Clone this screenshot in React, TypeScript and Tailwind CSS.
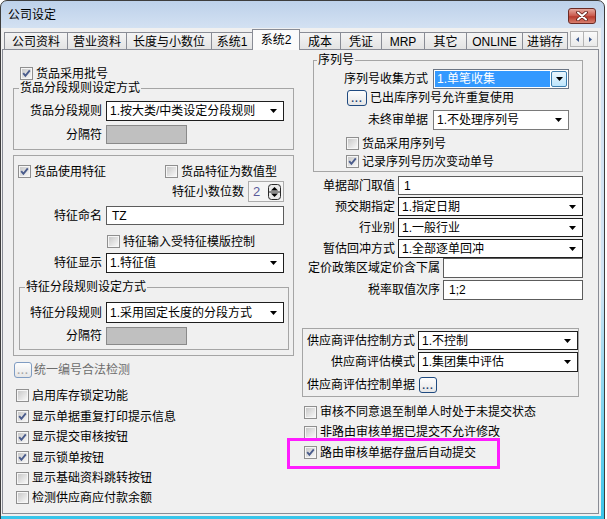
import React from 'react'

function Check({ on }: { on?: boolean }) {
  return (
    <span className="relative block w-[13px] h-[13px] shrink-0 border border-[#8f8f8f] bg-[#f6f6f6] p-[1px]">
      <span className="block w-full h-full bg-[linear-gradient(135deg,#c9c9c9,#f7f7f7)]" />
      {on && (
        <svg className="absolute left-0 top-0" width="11" height="11" viewBox="0 0 11 11">
          <path d="M2.2 5.2 L4.4 7.8 L8.8 2.4" fill="none" stroke="#4a5c8c" strokeWidth="1.9" />
        </svg>
      )}
    </span>
  )
}

function CheckRow({ on, label, className = '' }: { on?: boolean; label: string; className?: string }) {
  return (
    <div className={`flex items-center ${className}`}>
      <Check on={on} />
      <span className="ml-[3px] whitespace-nowrap">{label}</span>
    </div>
  )
}

function Combo({ value, className = '', light }: { value: string; className?: string; light?: boolean }) {
  return (
    <div
      className={`flex items-center justify-between bg-white border pl-[3px] pr-[6px] ${
        light ? 'border-[#7a7a7a]' : 'border-[#1e1e1e]'
      } ${className}`}
    >
      <span className="whitespace-nowrap">{value}</span>
      <svg width="7" height="4" viewBox="0 0 7 4">
        <path d="M0 0H7L3.5 4Z" fill="#000" />
      </svg>
    </div>
  )
}

function Field({ value = '', className = '' }: { value?: string; className?: string }) {
  return (
    <div className={`flex items-center bg-white border border-[#5c5c5c] pl-[5px] ${className}`}>{value}</div>
  )
}

function Dots({ disabled, className = '' }: { disabled?: boolean; className?: string }) {
  return (
    <div
      className={`flex items-end justify-center rounded-[3px] border bg-[linear-gradient(#fdfdfd,#e6e6e6)] pb-[2px] text-[10px] leading-[8px] font-bold tracking-[1px] ${
        disabled ? 'border-[#7f9cc2] text-[#a6a6a6]' : 'border-[#1f4a80] text-[#24426e]'
      } ${className}`}
    >
      ...
    </div>
  )
}

function Sep({ className = '' }: { className?: string }) {
  return <div className={`bg-[#c0c0c0] border border-[#8a8a8a] ${className}`} />
}

function Tab({ label, className = '', active }: { label: string; className?: string; active?: boolean }) {
  return (
    <div
      className={`flex justify-center border-[#898c95] whitespace-nowrap ${
        active
          ? 'relative z-10 h-[21px] items-start pt-[3px] bg-[#fbfbfb] border-t border-l border-r'
          : 'h-[18px] items-center bg-[linear-gradient(#f4f4f4,#e2e2e2)] border-t border-l'
      } ${className}`}
    >
      {label}
    </div>
  )
}

export default function App() {
  return (
    <div className="relative w-[607px] h-[519px] overflow-hidden bg-white text-[12px] leading-[14px] text-black font-['Liberation_Sans','Noto_Sans_CJK_SC',sans-serif]">
      <div className="w-[605px] h-[520px] flex flex-col border border-[#3d3d3d] rounded-t-[7px] bg-[linear-gradient(to_bottom,#bdd1ea_0px,#d3e1f2_27px,#cfe3f3_55%,#37c5ea_100%)]">
        {/* title bar */}
        <div className="h-[27px] shrink-0 flex items-start justify-between pl-[7px] pr-[8px]">
          <span className="mt-[7px] text-[12px]">公司设定</span>
          <div className="mt-[7px] w-[28px] h-[16px] flex items-center justify-center rounded-[3px] border border-[#6b2b25] bg-[linear-gradient(#e6a99f,#c9574a_50%,#b83a2d_55%,#d9806f)]">
            <svg width="12" height="10" viewBox="0 0 12 10">
              <path d="M2 1.5 L10 8.5 M10 1.5 L2 8.5" stroke="#5a1a14" strokeWidth="3.6" strokeLinecap="round" />
              <path d="M2 1.5 L10 8.5 M10 1.5 L2 8.5" stroke="#ffffff" strokeWidth="2" strokeLinecap="round" />
            </svg>
          </div>
        </div>

        {/* body */}
        <div className="flex-1 mr-[3px] mb-[3px] bg-[#f0f0f0] pt-[1px] flex flex-col">
          {/* tabs */}
          <div className="ml-[3px] -mb-px h-[21px] flex items-end">
            <Tab label="公司资料" className="w-[63px]" />
            <Tab label="营业资料" className="w-[59px]" />
            <Tab label="长度与小数位" className="w-[85px]" />
            <Tab label="系统1" className="w-[41px]" />
            <Tab label="系统2" className="w-[48px]" active />
            <Tab label="成本" className="w-[40px] border-l-0" />
            <Tab label="凭证" className="w-[41px]" />
            <Tab label="MRP" className="w-[43px]" />
            <Tab label="其它" className="w-[42px]" />
            <Tab label="ONLINE" className="w-[56px]" />
            <Tab label="进销存" className="w-[46px] border-r" />
            <div className="self-start mt-[2px] ml-[2px] flex">
              <div className="w-[14px] h-[16px] flex items-center justify-center border border-[#b4b4b4] bg-[linear-gradient(#fafafa,#e9e9e9)]">
                <svg width="3" height="5" viewBox="0 0 3 5"><path d="M3 0V5L0 2.5Z" fill="#3f5a8e" /></svg>
              </div>
              <div className="w-[14px] h-[16px] flex items-center justify-center border border-l-0 border-[#b4b4b4] bg-[linear-gradient(#fafafa,#e9e9e9)]">
                <svg width="3" height="5" viewBox="0 0 3 5"><path d="M0 0V5L3 2.5Z" fill="#3f5a8e" /></svg>
              </div>
            </div>
          </div>

          {/* page */}
          <div className="ml-[1px] w-[597px] h-[465px] border border-[#898c95] bg-[#f0f0f0] flex items-start">
            {/* left column */}
            <div className="ml-[10px] w-[281px] flex flex-col">
              <CheckRow on label="货品采用批号" className="mt-[16px] h-[15px] ml-[7px]" />

              <fieldset className="w-[281px] border border-[#a5a5a5] pb-[5px]">
                <legend className="ml-[5px] px-[1px] leading-[14px]">货品分段规则设定方式</legend>
                <div className="mt-[6px] flex items-center h-[20px]">
                  <span className="w-[88px] text-right whitespace-nowrap">货品分段规则</span>
                  <Combo value="1.按大类/中类设定分段规则" className="ml-[4px] w-[178px] h-[20px]" />
                </div>
                <div className="mt-[4px] flex items-center h-[19px]">
                  <span className="w-[88px] text-right">分隔符</span>
                  <Sep className="ml-[4px] w-[81px] h-[19px]" />
                </div>
              </fieldset>

              <div className="mt-[5px] w-[281px] border border-[#a5a5a5] pb-[5px]">
                <div className="mt-[9px] flex items-center h-[13px]">
                  <CheckRow on label="货品使用特征" className="ml-[4px] w-[147px]" />
                  <CheckRow label="货品特征为数值型" />
                </div>
                <div className="mt-[3px] flex items-center justify-end h-[21px] pr-[9px]">
                  <span className="whitespace-nowrap">特征小数位数</span>
                  <div className="ml-[4px] w-[36px] h-[21px] flex items-center justify-between border border-[#acacac] bg-[#f5f5f5] pl-[4px] pr-[2px]">
                    <span className="text-[#5a5a9a] text-[13px]">2</span>
                    <svg width="13" height="16" viewBox="0 0 13 16">
                      <rect x="0.5" y="0.5" width="12" height="15" rx="3" fill="#e9e9e9" stroke="#2a2a2a" />
                      <path d="M1 8H12" stroke="#2a2a2a" />
                      <path d="M3 6.5H10L6.5 3Z" fill="#000" />
                      <path d="M3 9.5H10L6.5 13Z" fill="#000" />
                    </svg>
                  </div>
                </div>
                <div className="mt-[4px] flex items-center h-[19px]">
                  <span className="w-[88px] text-right">特征命名</span>
                  <Field value="TZ" className="ml-[4px] w-[178px] h-[19px]" />
                </div>
                <CheckRow label="特征输入受特征模版控制" className="mt-[10px] h-[13px] ml-[93px]" />
                <div className="mt-[5px] flex items-center h-[20px]">
                  <span className="w-[88px] text-right">特征显示</span>
                  <Combo value="1.特征值" className="ml-[4px] w-[178px] h-[20px]" />
                </div>

                <fieldset className="mt-[7px] ml-[5px] w-[270px] border border-[#a5a5a5] pb-[4px]">
                  <legend className="ml-[5px] px-[1px] leading-[14px]">特征分段规则设定方式</legend>
                  <div className="mt-[8px] flex items-center h-[21px]">
                    <span className="w-[82px] text-right whitespace-nowrap">特征分段规则</span>
                    <Combo value="1.采用固定长度的分段方式" className="ml-[4px] w-[178px] h-[21px]" />
                  </div>
                  <div className="mt-[4px] flex items-center h-[18px]">
                    <span className="w-[82px] text-right">分隔符</span>
                    <Sep className="ml-[4px] w-[81px] h-[18px]" />
                  </div>
                </fieldset>
              </div>

              <div className="mt-[6px] flex items-center h-[16px]">
                <Dots disabled className="ml-[1px] w-[18px] h-[16px]" />
                <span className="ml-[2px] text-[#6d6d6d]">统一编号合法检测</span>
              </div>
              <CheckRow label="启用库存锁定功能" className="mt-[7px] h-[21px] ml-[3px]" />
              <CheckRow on label=" 显示单据重复打印提示信息" className="h-[21px] ml-[3px] whitespace-pre" />
              <CheckRow on label="显示提交审核按钮" className="h-[20px] ml-[3px]" />
              <CheckRow on label="显示锁单按钮" className="h-[21px] ml-[3px]" />
              <CheckRow label="显示基础资料跳转按钮" className="h-[20px] ml-[3px]" />
              <CheckRow label=" 检测供应商应付款余额" className="h-[19px] ml-[3px] whitespace-pre" />
            </div>

            {/* right column */}
            <div className="ml-[8px] w-[281px] flex flex-col">
              <fieldset className="mt-[3px] ml-[11px] w-[270px] border border-[#a5a5a5] pb-[3px]">
                <legend className="ml-[3px] px-[1px] leading-[14px]">序列号</legend>
                <div className="mt-[2px] flex items-center h-[20px]">
                  <span className="w-[114px] text-right whitespace-nowrap">序列号收集方式</span>
                  <div className="ml-[5px] w-[136px] h-[20px] flex items-stretch border border-[#6b7584] bg-white p-[1px]">
                    <div className="flex-1 flex items-center bg-[#3399ff] text-white pl-[2px]">1.单笔收集</div>
                    <div className="ml-[1px] w-[16px] flex items-center justify-center border border-[#3c7fb1] rounded-[2px] bg-[linear-gradient(#eaf6fd,#bee6fd)]">
                      <svg width="7" height="4" viewBox="0 0 7 4"><path d="M0 0H7L3.5 4Z" fill="#000" /></svg>
                    </div>
                  </div>
                </div>
                <div className="mt-[1px] flex items-center h-[16px]">
                  <Dots className="ml-[33px] w-[20px] h-[16px]" />
                  <span className="ml-[3px] whitespace-nowrap">已出库序列号允许重复使用</span>
                </div>
                <div className="mt-[4px] flex items-center h-[20px]">
                  <span className="w-[114px] text-right whitespace-nowrap">未终审单据</span>
                  <Combo light value="1.不处理序列号" className="ml-[5px] w-[136px] h-[20px]" />
                </div>
                <CheckRow label="货品采用序列号" className="mt-[7px] h-[13px] ml-[32px]" />
                <CheckRow on label="记录序列号历次变动单号" className="mt-[5px] h-[13px] ml-[32px]" />
              </fieldset>

              <div className="mt-[4px] flex items-center h-[19px]">
                <span className="w-[93px] text-right whitespace-nowrap">单据部门取值</span>
                <Field value="1" className="ml-[3px] w-[185px] h-[19px]" />
              </div>
              <div className="mt-[2px] flex items-center h-[19px]">
                <span className="w-[93px] text-right whitespace-nowrap">预交期指定</span>
                <Combo value="1.指定日期" className="ml-[3px] w-[185px] h-[19px]" />
              </div>
              <div className="mt-[2px] flex items-center h-[19px]">
                <span className="w-[93px] text-right whitespace-nowrap">行业别</span>
                <Combo value="1.一般行业" className="ml-[3px] w-[185px] h-[19px]" />
              </div>
              <div className="mt-[2px] flex items-center h-[19px]">
                <span className="w-[93px] text-right whitespace-nowrap">暂估回冲方式</span>
                <Combo value="1.全部逐单回冲" className="ml-[3px] w-[185px] h-[19px]" />
              </div>
              <div className="flex items-center h-[20px]">
                <span className="w-[138px] text-right whitespace-nowrap">定价政策区域定价含下属</span>
                <Field className="ml-[3px] w-[140px] h-[20px]" />
              </div>
              <div className="mt-[2px] flex items-center h-[20px]">
                <span className="w-[138px] text-right whitespace-nowrap">税率取值次序</span>
                <Field value="1;2" className="ml-[3px] w-[140px] h-[20px]" />
              </div>

              <div className="mt-[28px] w-[277px] border border-[#a5a5a5] pb-[3px]">
                <div className="mt-[2px] flex items-center h-[19px]">
                  <span className="w-[112px] text-right whitespace-nowrap">供应商评估控制方式</span>
                  <Combo value="1.不控制" className="ml-[3px] w-[160px] h-[19px]" />
                </div>
                <div className="mt-[2px] flex items-center h-[20px]">
                  <span className="w-[112px] text-right whitespace-nowrap">供应商评估模式</span>
                  <Combo value="1.集团集中评估" className="ml-[3px] w-[160px] h-[20px]" />
                </div>
                <div className="mt-[5px] flex items-center h-[16px]">
                  <span className="w-[112px] text-right whitespace-nowrap">供应商评估控制单据</span>
                  <Dots className="ml-[4px] w-[18px] h-[16px]" />
                </div>
              </div>

              <CheckRow label="审核不同意退至制单人时处于未提交状态" className="mt-[5px] h-[20px] ml-[2px]" />
              <CheckRow label="非路由审核单据已提交不允许修改" className="h-[20px] ml-[2px]" />
              <CheckRow on label="路由审核单据存盘后自动提交" className="h-[21px] ml-[2px]" />
            </div>
          </div>
        </div>
      </div>

      {/* highlight annotation */}
      <div className="absolute left-[287px] top-[438px] w-[213px] h-[31px] border-[3px] border-[#ff1cff]" />
    </div>
  )
}
